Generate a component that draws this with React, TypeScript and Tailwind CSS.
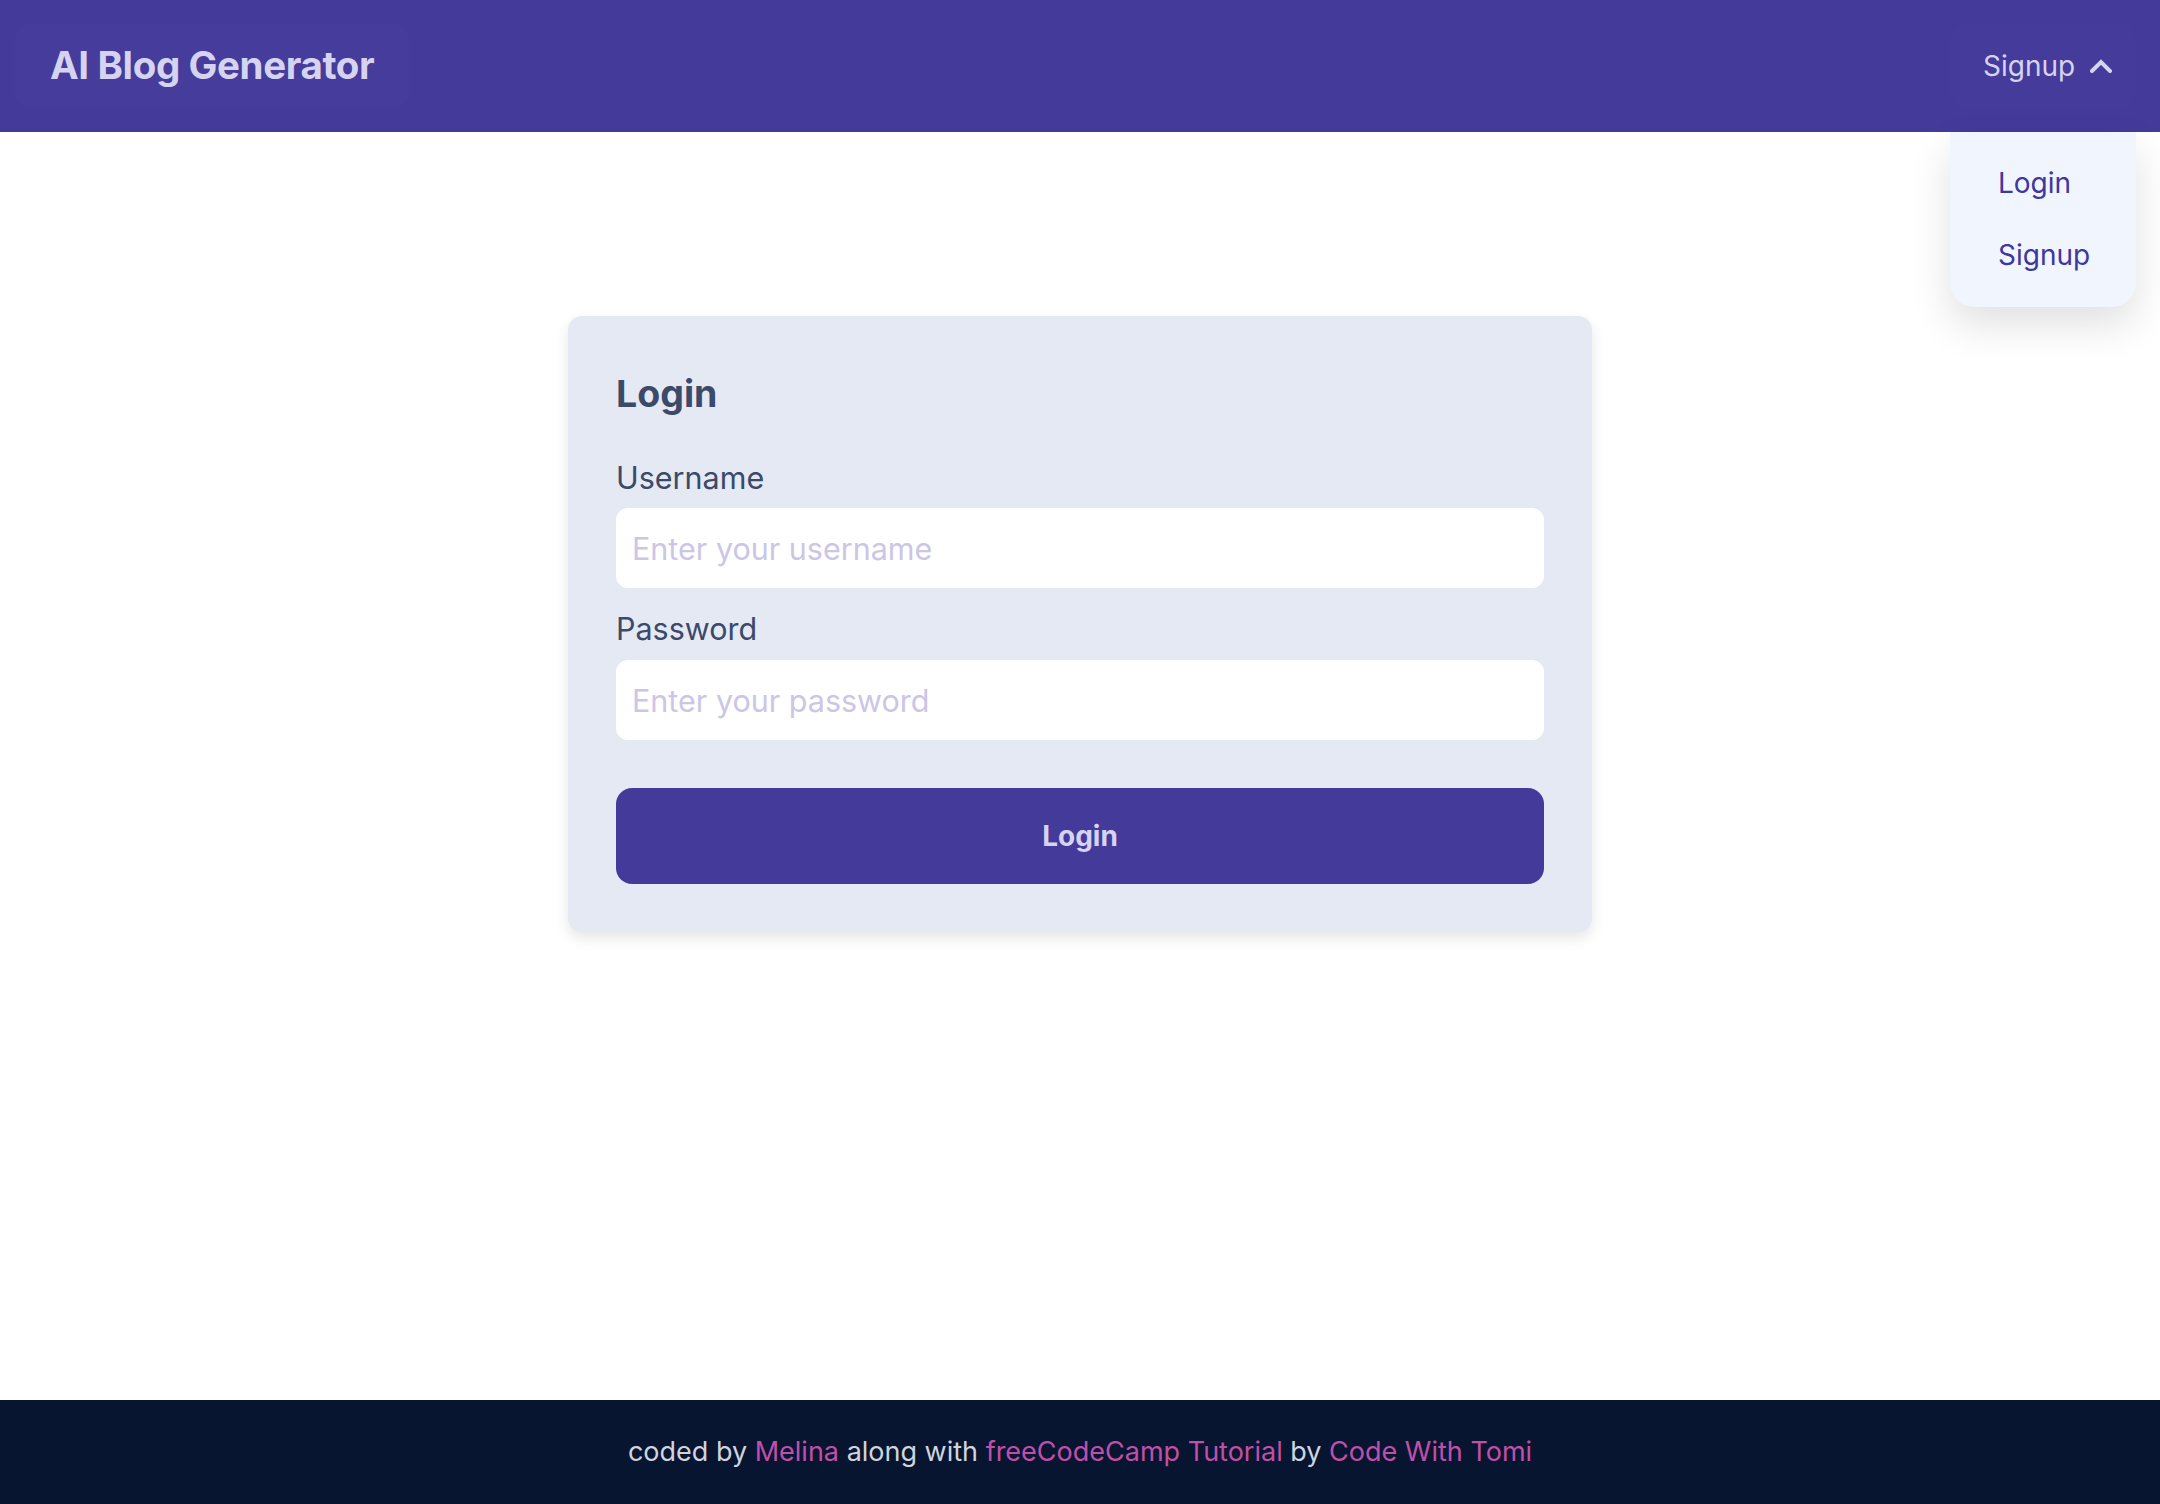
import React from "react";

export default function App() {
  return (
    <div className="min-h-screen flex flex-col bg-white" style={{ fontFamily: "Inter, 'Noto Sans', sans-serif" }}>
      <header className="relative h-[132px] shrink-0 bg-[#443a9a] flex items-center justify-between pl-[15px] pr-[24px]">
        <div className="h-[84px] px-[35px] flex items-center rounded-[16px] bg-white/[0.008]">
          <span className="text-[38.5px] font-bold text-[#d5d3f0] tracking-[-0.01em]">AI Blog Generator</span>
        </div>
        <div className="h-[84px] w-[186px] pl-[33px] flex items-center rounded-[16px] bg-white/[0.006]">
          <span className="text-[28px] text-[#d5d3f0]">Signup</span>
          <svg className="ml-[15px]" width="22" height="14" viewBox="0 0 22 14" fill="none">
            <path d="M2 12 L11 3 L20 12" stroke="#d5d3f0" strokeWidth="4" strokeLinecap="square" />
          </svg>
        </div>
        <div className="absolute right-[24px] top-[132px] w-[186px] pt-[15px] pb-[16px] bg-[#f0f5fe] rounded-b-[24px] shadow-[0_18px_40px_rgba(0,0,0,0.12)] z-10">
          <div className="h-[72px] flex items-center pl-[48px] text-[28px] text-[#3f36a0]">Login</div>
          <div className="h-[72px] flex items-center pl-[48px] text-[28px] text-[#3f36a0]">Signup</div>
        </div>
      </header>

      <main className="flex-1 flex justify-center">
        <div className="mt-[184px] w-[1024px] h-fit bg-[#e5e9f4] rounded-[14px] p-[48px] shadow-[0_6px_14px_rgba(0,0,0,0.10)]">
          <h1 className="text-[37.5px] font-bold leading-[60px] text-[#3b4a69]">Login</h1>
          <label className="block mt-[31px] text-[30.5px] leading-[45px] text-[#3b4a69]">Username</label>
          <input
            type="text"
            placeholder="Enter your username"
            className="mt-[8px] block w-full h-[80px] rounded-[12px] bg-white pl-[16px] text-[30.5px] text-[#3b4a69] placeholder:text-[#cbc6e6] outline-none"
          />
          <label className="block mt-[18px] text-[30.5px] leading-[45px] text-[#3b4a69]">Password</label>
          <input
            type="password"
            placeholder="Enter your password"
            className="mt-[9px] block w-full h-[80px] rounded-[12px] bg-white pl-[16px] text-[30.5px] text-[#3b4a69] placeholder:text-[#cbc6e6] outline-none"
          />
          <button className="mt-[48px] w-full h-[96px] rounded-[16px] bg-[#443a9a] text-[28px] font-bold text-[#d6d3f0]">
            Login
          </button>
        </div>
      </main>

      <footer className="h-[104px] shrink-0 bg-[#081530] flex items-center justify-center text-[27px] text-[#cfd4de]">
        <p>
          coded by <span className="text-[#c04fa8]">Melina</span> along with{" "}
          <span className="text-[#c04fa8]">freeCodeCamp Tutorial</span> by{" "}
          <span className="text-[#c04fa8]">Code With Tomi</span>
        </p>
      </footer>
    </div>
  );
}
